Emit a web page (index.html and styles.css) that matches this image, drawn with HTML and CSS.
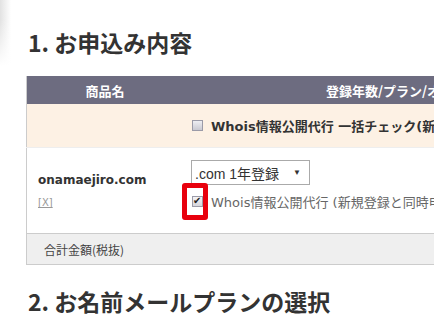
FILE: index.html
```html
<!DOCTYPE html>
<html lang="ja">
<head>
    <meta charset="UTF-8">
    <meta name="viewport" content="width=device-width, initial-scale=1.0">
    <title>お申込み内容</title>
    <link rel="stylesheet" href="styles.css">
</head>
<body>
    <div class="page">
        <h2 class="section-title">1. お申込み内容</h2>

        <table class="order">
            <thead>
                <tr>
                    <th class="col-name">商品名</th>
                    <th class="col-plan">登録年数/プラン/オプション</th>
                </tr>
            </thead>
            <tbody>
                <tr class="bulk-row">
                    <td></td>
                    <td>
                        <label class="option bulk">
                            <span class="cb"></span>
                            Whois情報公開代行 一括チェック(新規登録と同時申込)
                        </label>
                    </td>
                </tr>
                <tr class="item-row">
                    <td class="item-name">
                        <div class="domain">onamaejiro.com</div>
                        <a class="remove" href="#">[X]</a>
                    </td>
                    <td class="item-plan">
                        <div class="fake-select">
                            <span>.com 1年登録</span>
                            <span class="arrow">▼</span>
                        </div>
                        <label class="option">
                            <span class="cb checked">
                                <!-- annotation box from the screenshot -->
                                <span class="highlight"></span>
                            </span>
                            Whois情報公開代行 (新規登録と同時申込で無料)
                        </label>
                    </td>
                </tr>
                <tr class="total-row">
                    <td colspan="2">合計金額(税抜)</td>
                </tr>
            </tbody>
        </table>

        <h2 class="section-title second">2. お名前メールプランの選択</h2>
    </div>
</body>
</html>
```

FILE: styles.css
```css
html, body {
    margin: 0;
    padding: 0;
}

body {
    font-family: "DejaVu Sans", "Noto Sans CJK JP", sans-serif;
    color: #333;
    background-color: #fff;
    background-image:
        linear-gradient(to bottom, rgba(255,255,255,0) 20px, #fff 66px),
        linear-gradient(to right, #e2e2e2, rgba(255,255,255,0) 11px);
    background-size: 100% 70px;
    background-repeat: no-repeat;
    overflow: hidden;
    width: 434px;
    height: 332px;
}

.page {
    padding: 26px 0 0 26px;
}

.section-title {
    margin: 0 0 18px 2px;
    font-family: "Noto Sans CJK JP", sans-serif;
    font-size: 23px;
    font-weight: bold;
    line-height: 32px;
    color: #333;
    white-space: nowrap;
}

.section-title.second {
    margin-top: 20px;
}

.order {
    width: 620px;
    border-collapse: collapse;
    border-left: 1px solid #ccc;
    font-size: 12px;
}

.order th {
    height: 28px;
    padding: 0;
    background: #6d6c80;
    color: #fff;
    font-family: "Noto Sans CJK JP", sans-serif;
    font-size: 13px;
    font-weight: bold;
}

.order .col-name {
    width: 156px;
    text-align: center;
}

.order .col-plan {
    text-align: left;
    padding-left: 143px;
}

.bulk-row td {
    height: 43px;
    padding: 0 0 0 9px;
    background: #fdf1e4;
    border-bottom: 1px solid #eee;
}

.option {
    display: flex;
    align-items: center;
    gap: 8px;
    white-space: nowrap;
}

.bulk {
    font-weight: bold;
    color: #333;
    font-size: 13px;
}

.cb {
    position: relative;
    flex: none;
    width: 9px;
    height: 9px;
    border: 1px solid #9b9ba8;
    background: linear-gradient(#eeeef2, #c9c9d2);
}

.cb.checked {
    background: linear-gradient(#f4f4f6, #d6d6dc);
}

.cb.checked::after {
    content: "✔";
    position: absolute;
    left: 0;
    top: -3px;
    font-size: 10px;
    line-height: 14px;
    color: #222;
}

.highlight {
    position: absolute;
    left: -11px;
    top: -14px;
    width: 16px;
    height: 27px;
    border: 5px solid #e8000d;
    border-radius: 3px;
}

.item-row td {
    vertical-align: top;
    background: #fff;
    border-bottom: 1px solid #ccc;
}

.item-name {
    padding: 24px 0 0 11px;
}

.domain {
    font-weight: bold;
    font-size: 12px;
    line-height: 16px;
    color: #333;
}

.remove {
    display: inline-block;
    margin-top: 9px;
    font-size: 10px;
    color: #999;
    text-decoration: underline;
}

.item-plan {
    padding: 12px 0 20px 8px;
}

.fake-select {
    display: flex;
    justify-content: space-between;
    align-items: center;
    box-sizing: border-box;
    width: 119px;
    height: 25px;
    padding: 0 8px 0 3px;
    border: 1px solid #aaa;
    font-size: 14px;
    font-family: "Liberation Sans", "Noto Sans CJK JP", sans-serif;
    color: #333;
}

.fake-select .arrow {
    font-size: 8px;
}

.item-plan .option {
    margin: 4px 0 0 1px;
    height: 24px;
    font-size: 13px;
    color: #666;
}

.total-row td {
    height: 30px;
    padding: 0 0 0 17px;
    background: #efefef;
    border-bottom: 1px solid #ccc;
    font-family: "Noto Sans CJK JP", sans-serif;
    font-size: 12px;
    color: #444;
}
```
